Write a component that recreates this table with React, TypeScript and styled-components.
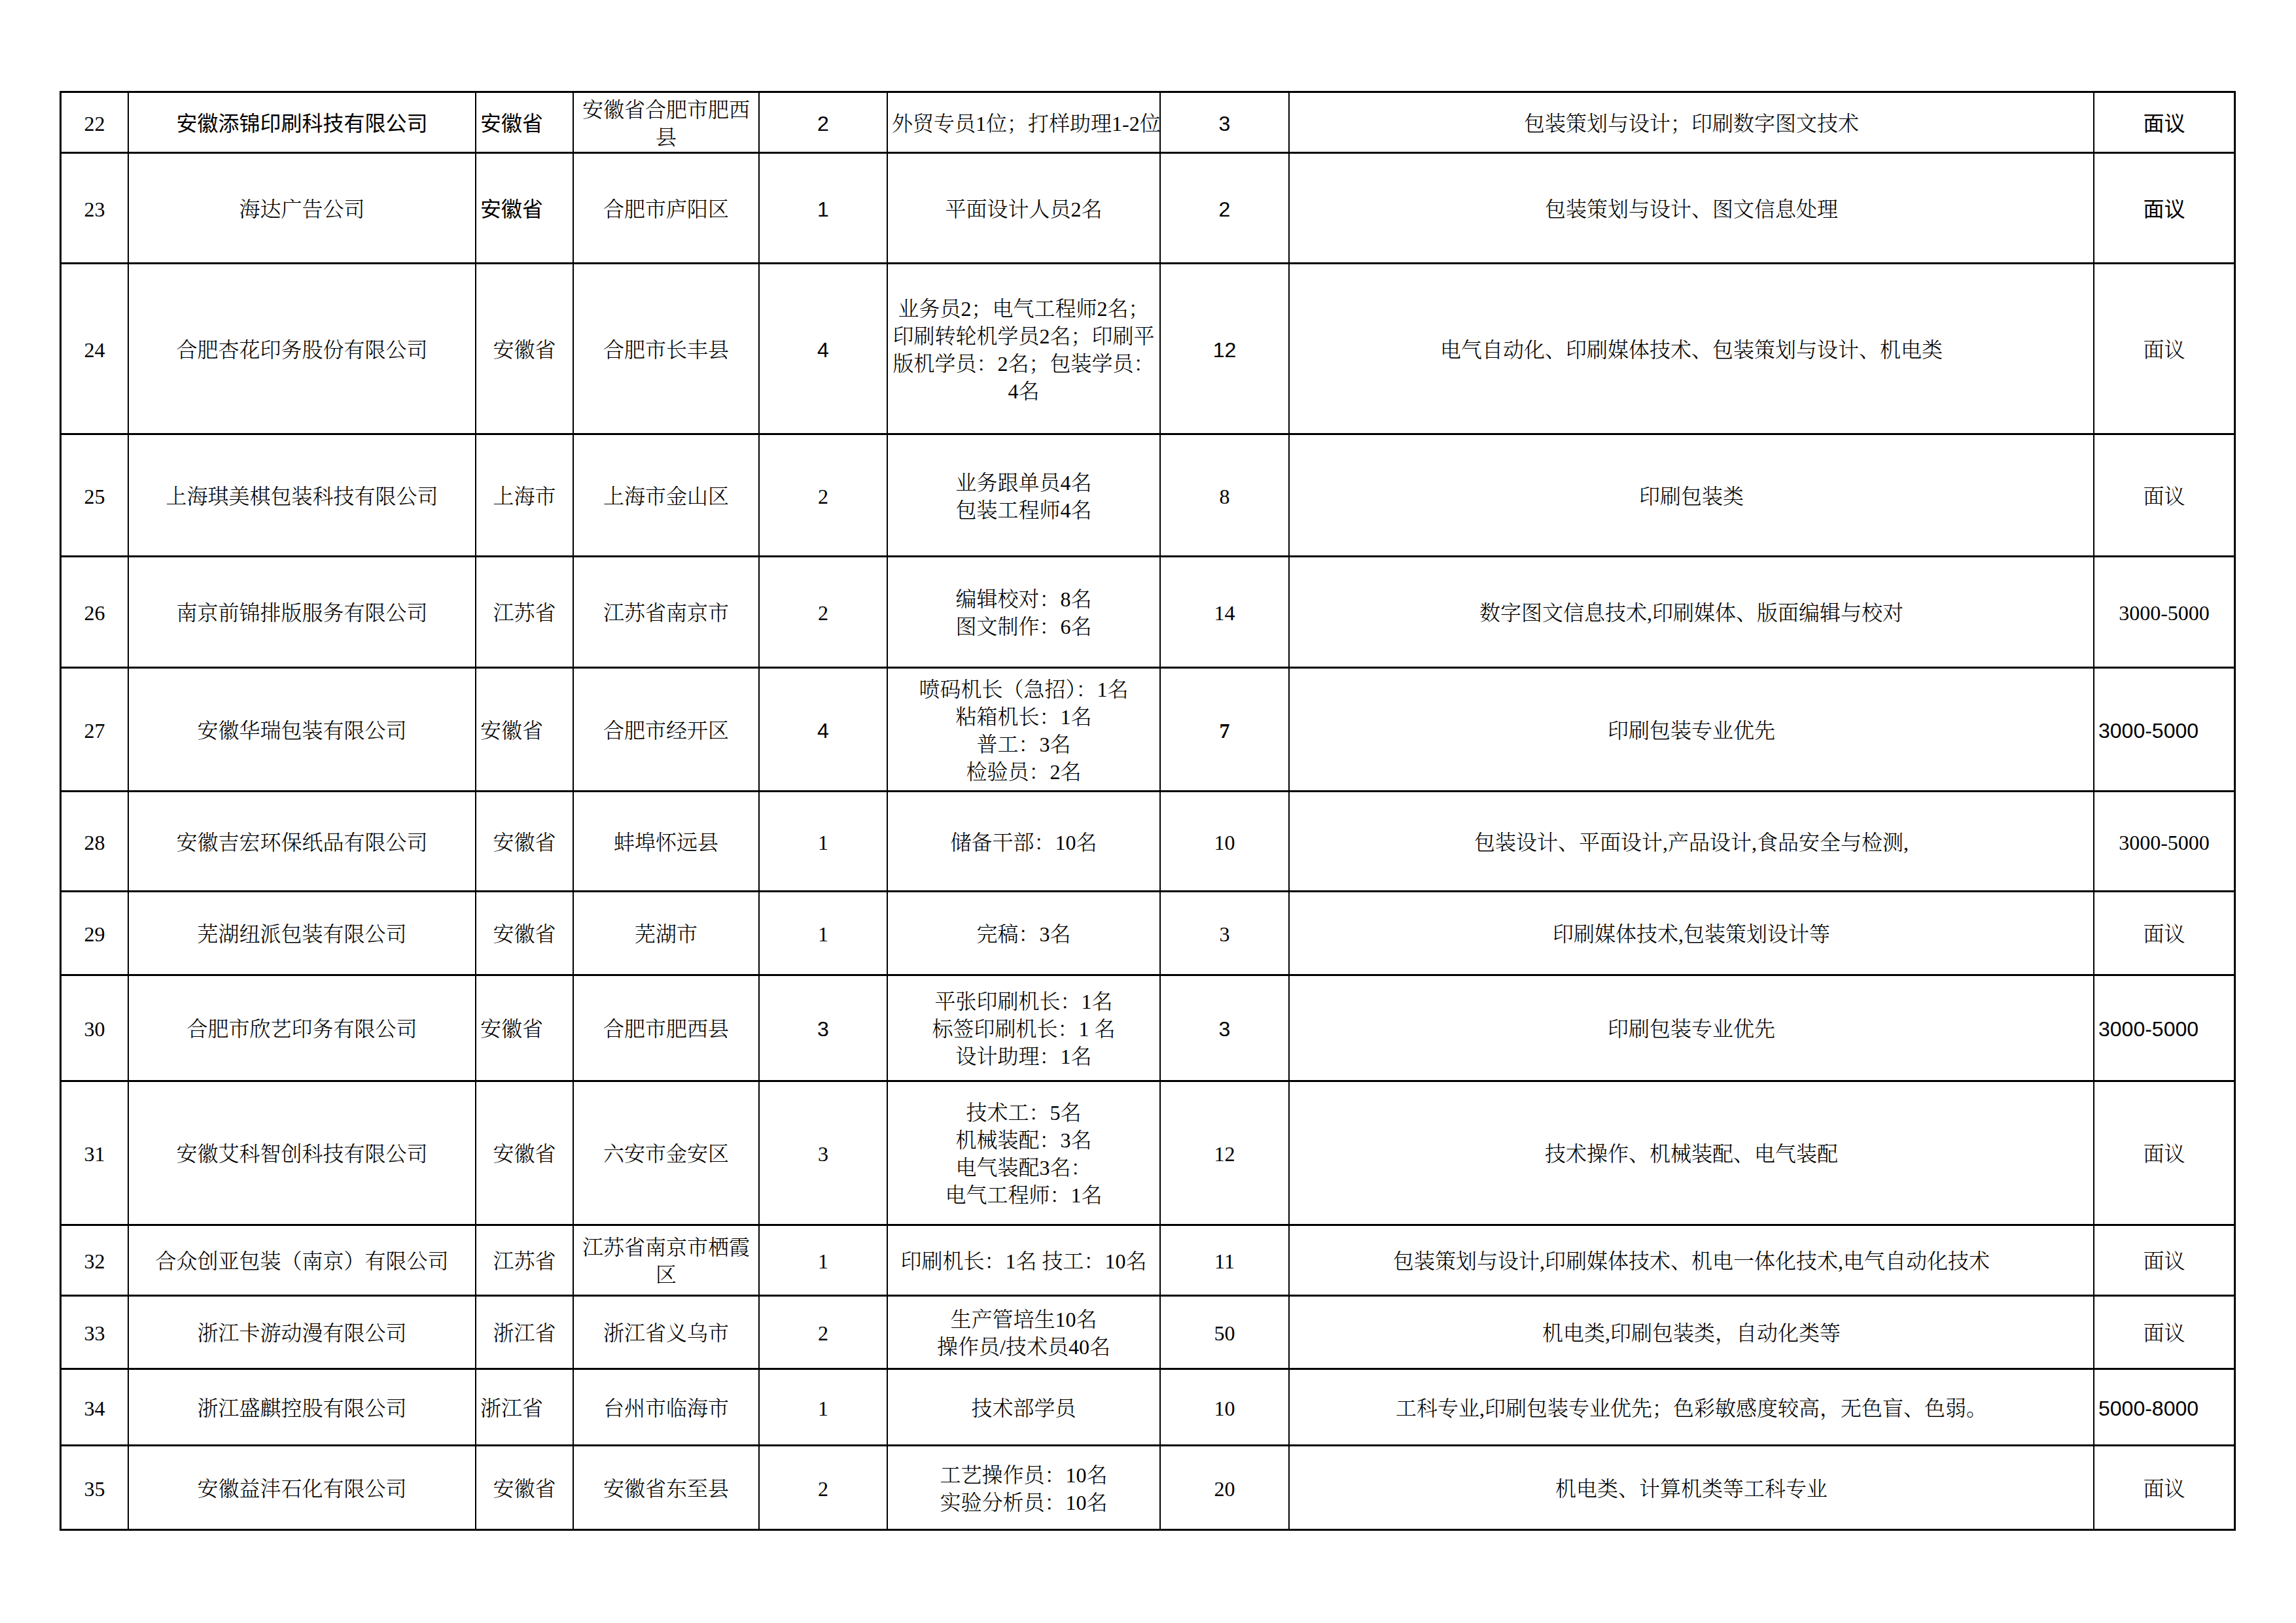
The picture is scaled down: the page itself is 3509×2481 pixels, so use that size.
import React from 'react';
import styled, { createGlobalStyle } from 'styled-components';

const GlobalStyle = createGlobalStyle`
  html, body { margin: 0; padding: 0; background: #ffffff; }
  body { width: 3509px; height: 2481px; overflow: hidden; }
`;

const SERIF = `"Liberation Serif", "Noto Serif CJK SC", "Noto Sans CJK SC", serif`;
const SANS = `"Liberation Sans", "Noto Sans CJK SC", sans-serif`;

type Font = 'S' | 'H';
type Align = 'left' | 'center';

interface CellData {
  t: string | string[];
  f?: Font;
  a?: Align;
  b?: boolean;
}

const COLS = [101, 529, 147, 282, 194, 415, 195, 1228, 213];
const ROWS = [90, 166, 258, 184, 167, 186, 150, 125, 159, 217, 105, 109, 114, 126];

const H = (t: string | string[], a: Align = 'center'): CellData => ({ t, f: 'H', a });
const S = (t: string | string[], a: Align = 'center'): CellData => ({ t, f: 'S', a });

const DATA: CellData[][] = [
  [S('22'), H('安徽添锦印刷科技有限公司'), H('安徽省', 'left'), S(['安徽省合肥市肥西', '县']), H('2'), S('外贸专员1位；打样助理1-2位', 'left'), H('3'), S('包装策划与设计；印刷数字图文技术'), H('面议')],
  [S('23'), S('海达广告公司'), H('安徽省', 'left'), S('合肥市庐阳区'), H('1'), S('平面设计人员2名'), H('2'), S('包装策划与设计、图文信息处理'), H('面议')],
  [S('24'), S('合肥杏花印务股份有限公司'), S('安徽省'), S('合肥市长丰县'), H('4'), S(['业务员2；电气工程师2名；', '印刷转轮机学员2名；印刷平', '版机学员：2名；包装学员：', '4名']), H('12'), S('电气自动化、印刷媒体技术、包装策划与设计、机电类'), S('面议')],
  [S('25'), S('上海琪美棋包装科技有限公司'), S('上海市'), S('上海市金山区'), S('2'), S(['业务跟单员4名', '包装工程师4名']), S('8'), S('印刷包装类'), S('面议')],
  [S('26'), S('南京前锦排版服务有限公司'), S('江苏省'), S('江苏省南京市'), S('2'), S(['编辑校对：8名', '图文制作：6名']), S('14'), S('数字图文信息技术,印刷媒体、版面编辑与校对'), S('3000-5000')],
  [S('27'), S('安徽华瑞包装有限公司'), S('安徽省', 'left'), S('合肥市经开区'), H('4'), S(['喷码机长（急招）：1名', '粘箱机长：1名', '普工：3名', '检验员：2名']), { t: '7', f: 'S', a: 'center', b: true }, S('印刷包装专业优先'), H('3000-5000', 'left')],
  [S('28'), S('安徽吉宏环保纸品有限公司'), S('安徽省'), S('蚌埠怀远县'), S('1'), S('储备干部：10名'), S('10'), S('包装设计、平面设计,产品设计,食品安全与检测,'), S('3000-5000')],
  [S('29'), S('芜湖纽派包装有限公司'), S('安徽省'), S('芜湖市'), S('1'), S('完稿：3名'), S('3'), S('印刷媒体技术,包装策划设计等'), S('面议')],
  [S('30'), S('合肥市欣艺印务有限公司'), S('安徽省', 'left'), S('合肥市肥西县'), H('3'), S(['平张印刷机长：1名', '标签印刷机长：1 名', '设计助理：1名']), H('3'), S('印刷包装专业优先'), H('3000-5000', 'left')],
  [S('31'), S('安徽艾科智创科技有限公司'), S('安徽省'), S('六安市金安区'), S('3'), S(['技术工：5名', '机械装配：3名', '电气装配3名：', '电气工程师：1名']), S('12'), S('技术操作、机械装配、电气装配'), S('面议')],
  [S('32'), S('合众创亚包装（南京）有限公司'), S('江苏省'), S(['江苏省南京市栖霞', '区']), S('1'), S('印刷机长：1名 技工：10名'), S('11'), S('包装策划与设计,印刷媒体技术、机电一体化技术,电气自动化技术'), S('面议')],
  [S('33'), S('浙江卡游动漫有限公司'), S('浙江省'), S('浙江省义乌市'), S('2'), S(['生产管培生10名', '操作员/技术员40名']), S('50'), S('机电类,印刷包装类，自动化类等'), S('面议')],
  [S('34'), S('浙江盛麒控股有限公司'), S('浙江省', 'left'), S('台州市临海市'), S('1'), S('技术部学员'), S('10'), S('工科专业,印刷包装专业优先；色彩敏感度较高，无色盲、色弱。'), H('5000-8000', 'left')],
  [S('35'), S('安徽益沣石化有限公司'), S('安徽省'), S('安徽省东至县'), S('2'), S(['工艺操作员：10名', '实验分析员：10名']), S('20'), S('机电类、计算机类等工科专业'), S('面议')],
];

const Page = styled.div`
  box-sizing: border-box;
  width: 3509px;
  height: 2481px;
  padding: 139px 0 0 91px;
  background: #ffffff;
`;

const Sheet = styled.div<{ $cols: string; $rows: string }>`
  display: grid;
  width: max-content;
  grid-template-columns: ${(p) => p.$cols};
  grid-template-rows: ${(p) => p.$rows};
  column-gap: 2px;
  row-gap: 3px;
  padding: 3px;
  background: #000000;
`;

const Row = styled.div`
  display: contents;
`;

const Cell = styled.div<{ $font: Font; $align: Align; $bold: boolean }>`
  box-sizing: border-box;
  background: #ffffff;
  display: flex;
  flex-direction: column;
  justify-content: center;
  align-items: ${(p) => (p.$align === 'left' ? 'flex-start' : 'center')};
  text-align: ${(p) => p.$align};
  padding: ${(p) => (p.$align === 'left' ? '3px 0 0 6px' : '3px 0 0 0')};
  overflow: visible;
  color: #000000;
  font-family: ${(p) => (p.$font === 'S' ? SERIF : SANS)};
  font-weight: ${(p) => (p.$bold ? 700 : p.$font === 'S' ? 300 : 400)};
  font-size: 32px;
  line-height: 42px;
`;

const Line = styled.span`
  display: block;
  white-space: nowrap;
`;

export default function App() {
  return (
    <>
      <GlobalStyle />
      <Page>
        <Sheet $cols={COLS.map((c) => `${c}px`).join(' ')} $rows={ROWS.map((r) => `${r}px`).join(' ')}>
          {DATA.map((row, ri) => (
            <Row key={ri}>
              {row.map((cell, ci) => {
                const lines = Array.isArray(cell.t) ? cell.t : [cell.t];
                return (
                  <Cell key={ci} $font={cell.f ?? 'S'} $align={cell.a ?? 'center'} $bold={!!cell.b}>
                    {lines.map((l, li) => (
                      <Line key={li}>{l}</Line>
                    ))}
                  </Cell>
                );
              })}
            </Row>
          ))}
        </Sheet>
      </Page>
    </>
  );
}
